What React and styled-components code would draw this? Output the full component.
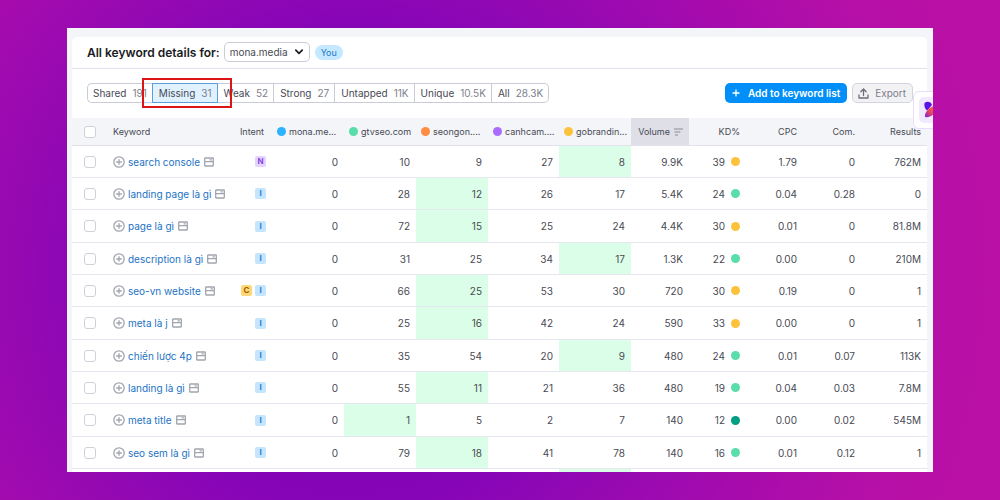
import React, { useState } from "react";
import styled, { createGlobalStyle } from "styled-components";

const SITES = [
  { name: "mona.me...", color: "#2bb3ff", width: 72 },
  { name: "gtvseo.com", color: "#59ddaa", width: 72 },
  { name: "seongon....", color: "#ff8c43", width: 72 },
  { name: "canhcam....", color: "#ab6cfe", width: 71 },
  { name: "gobrandin...", color: "#fdc23c", width: 72 },
];

const TABS = [
  { label: "Shared", count: "191" },
  { label: "Missing", count: "31" },
  { label: "Weak", count: "52" },
  { label: "Strong", count: "27" },
  { label: "Untapped", count: "11K" },
  { label: "Unique", count: "10.5K" },
  { label: "All", count: "28.3K" },
];

const KD_COLORS = {
  medium: "#fdc23c",
  easy: "#59ddaa",
  veryEasy: "#009f81",
};

// best: index of the site with the highest position
const KEYWORDS = [
  { word: "search console", intents: ["N"], ranks: [0, 10, 9, 27, 8], best: 4, volume: "9.9K", kd: 39, level: "medium", cpc: "1.79", com: "0", results: "762M" },
  { word: "landing page là gì", intents: ["I"], ranks: [0, 28, 12, 26, 17], best: 2, volume: "5.4K", kd: 24, level: "easy", cpc: "0.04", com: "0.28", results: "0" },
  { word: "page là gì", intents: ["I"], ranks: [0, 72, 15, 25, 24], best: 2, volume: "4.4K", kd: 30, level: "medium", cpc: "0.01", com: "0", results: "81.8M" },
  { word: "description là gì", intents: ["I"], ranks: [0, 31, 25, 34, 17], best: 4, volume: "1.3K", kd: 22, level: "easy", cpc: "0.00", com: "0", results: "210M" },
  { word: "seo-vn website", intents: ["C", "I"], ranks: [0, 66, 25, 53, 30], best: 2, volume: "720", kd: 30, level: "medium", cpc: "0.19", com: "0", results: "1" },
  { word: "meta là j", intents: ["I"], ranks: [0, 25, 16, 42, 24], best: 2, volume: "590", kd: 33, level: "medium", cpc: "0.00", com: "0", results: "1" },
  { word: "chiến lược 4p", intents: ["I"], ranks: [0, 35, 54, 20, 9], best: 4, volume: "480", kd: 24, level: "easy", cpc: "0.01", com: "0.07", results: "113K" },
  { word: "landing là gì", intents: ["I"], ranks: [0, 55, 11, 21, 36], best: 2, volume: "480", kd: 19, level: "easy", cpc: "0.04", com: "0.03", results: "7.8M" },
  { word: "meta title", intents: ["I"], ranks: [0, 1, 5, 2, 7], best: 1, volume: "140", kd: 12, level: "veryEasy", cpc: "0.00", com: "0.02", results: "545M" },
  { word: "seo sem là gì", intents: ["I"], ranks: [0, 79, 18, 41, 78], best: 2, volume: "140", kd: 16, level: "easy", cpc: "0.01", com: "0.12", results: "1" },
];

const PlusCircleIcon = () => (
  <svg width="12" height="12" viewBox="0 0 12 12" fill="none" stroke="#a2a5b0" strokeWidth="1.3">
    <circle cx="6" cy="6" r="5.2" />
    <path d="M6 3.2v5.6M3.2 6h5.6" />
  </svg>
);

const SerpIcon = () => (
  <svg width="10" height="10" viewBox="0 0 10 10" fill="none" stroke="#a2a5b0" strokeWidth="1.3">
    <rect x="0.7" y="1" width="8.6" height="8" rx="0.4" />
    <path d="M0.7 4.6h8.6M5.6 2.8h2.2" />
  </svg>
);

const ChevronIcon = () => (
  <svg width="8" height="6" viewBox="0 0 8 6" fill="none" stroke="#191b23" strokeWidth="1.7">
    <path d="M0.8 1.2L4 4.4l3.2-3.2" strokeLinecap="round" strokeLinejoin="round" />
  </svg>
);

const AddIcon = () => (
  <svg width="8" height="8" viewBox="0 0 8 8" stroke="#fff" strokeWidth="1.3">
    <path d="M4 0.5v7M0.5 4h7" />
  </svg>
);

const ExportIcon = () => (
  <svg width="11" height="11" viewBox="0 0 11 11" fill="none" stroke="#6c6e79" strokeWidth="1.3">
    <path d="M1 7V10h9V7M5.5 7.5V1.2M2.8 3.7l2.7-2.7 2.7 2.7" strokeLinecap="round" strokeLinejoin="round" />
  </svg>
);

const SortIcon = () => (
  <svg width="9" height="8" viewBox="0 0 9 8" stroke="#8a8e9b" strokeWidth="1.2">
    <path d="M0 1h9M0.5 4h6M1 7h3" />
  </svg>
);

const AssistantIcon = () => (
  <svg width="16" height="18" viewBox="0 0 16 18">
    <defs>
      <linearGradient id="blade" x1="0" y1="1" x2="1" y2="0">
        <stop offset="0" stopColor="#7a1ee0" />
        <stop offset="0.4" stopColor="#e8485c" />
        <stop offset="1" stopColor="#ff7a4a" />
      </linearGradient>
    </defs>
    <path d="M0.5 2C3 0 7 0.5 8 4L3.2 9.6C0.8 8 0 5 0.5 2Z" fill="#5a12e6" />
    <path d="M1.2 16C0 12 4.5 5.5 14.5 3.5C15 10 7 17.5 1.2 16Z" fill="url(#blade)" />
  </svg>
);

const App = () => {
  const [activeTab, setActiveTab] = useState("Missing");

  return (
    <>
      <GlobalStyle />
      <Page>
        <Frame>
          <Card>
            <CardHeader>
              <Title id="domain-label">All keyword details for:</Title>
              <SelectBox>
                <DomainSelect aria-labelledby="domain-label">
                  <option>mona.media</option>
                </DomainSelect>
                <SelectArrow>
                  <ChevronIcon />
                </SelectArrow>
              </SelectBox>
              <YouBadge>You</YouBadge>
            </CardHeader>

            <Toolbar>
              <Tabs>
                {TABS.map((tab) => (
                  <Tab
                    key={tab.label}
                    type="button"
                    $active={tab.label === activeTab}
                    onClick={() => setActiveTab(tab.label)}
                  >
                    {tab.label}
                    <TabCount>{tab.count}</TabCount>
                    {tab.label === "Missing" && <Highlight />}
                  </Tab>
                ))}
              </Tabs>
              <Actions>
                <AddButton type="button">
                  <AddIcon />
                  Add to keyword list
                </AddButton>
                <ExportButton type="button">
                  <ExportIcon />
                  Export
                </ExportButton>
              </Actions>
            </Toolbar>

            <Table>
              <colgroup>
                <Col $width={34} />
                <Col />
                <Col $width={44} />
                {SITES.map((site) => (
                  <Col key={site.name} $width={site.width} />
                ))}
                <Col $width={58} />
                <Col $width={57} />
                <Col $width={57} />
                <Col $width={58} />
                <Col $width={66} />
              </colgroup>
              <thead>
                <tr>
                  <HeadCell>
                    <Checkbox aria-label="Select all keywords" />
                  </HeadCell>
                  <HeadCell $align="left">Keyword</HeadCell>
                  <HeadCell $wide>Intent</HeadCell>
                  {SITES.map((site) => (
                    <HeadCell key={site.name}>
                      <SiteLabel>
                        <Dot $color={site.color} />
                        {site.name}
                      </SiteLabel>
                    </HeadCell>
                  ))}
                  <HeadCell $sorted>
                    <SortLabel>
                      Volume
                      <SortIcon />
                    </SortLabel>
                  </HeadCell>
                  <HeadCell>KD%</HeadCell>
                  <HeadCell>CPC</HeadCell>
                  <HeadCell>Com.</HeadCell>
                  <HeadCell>Results</HeadCell>
                </tr>
              </thead>
              <tbody>
                {KEYWORDS.map((item) => (
                  <Row key={item.word}>
                    <Cell>
                      <Checkbox aria-label={`Select ${item.word}`} />
                    </Cell>
                    <Cell $align="left">
                      <Keyword>
                        <IconButton type="button" aria-label={`Add ${item.word}`}>
                          <PlusCircleIcon />
                        </IconButton>
                        <KeywordLink href="#">{item.word}</KeywordLink>
                        <IconButton type="button" aria-label={`SERP of ${item.word}`}>
                          <SerpIcon />
                        </IconButton>
                      </Keyword>
                    </Cell>
                    <Cell>
                      <Intents>
                        {item.intents.map((intent) => (
                          <Intent key={intent} $type={intent}>
                            {intent}
                          </Intent>
                        ))}
                      </Intents>
                    </Cell>
                    {item.ranks.map((rank, i) => (
                      <Cell key={SITES[i].name} $best={i === item.best}>
                        {rank}
                      </Cell>
                    ))}
                    <Cell>{item.volume}</Cell>
                    <Cell>
                      <Difficulty>
                        {item.kd}
                        <Dot $color={KD_COLORS[item.level]} />
                      </Difficulty>
                    </Cell>
                    <Cell>{item.cpc}</Cell>
                    <Cell>{item.com}</Cell>
                    <Cell>{item.results}</Cell>
                  </Row>
                ))}
                <Row>
                  <Cell colSpan={7} />
                  <Cell $best />
                  <Cell colSpan={5} />
                </Row>
              </tbody>
            </Table>
          </Card>
          <Assistant type="button" aria-label="Open assistant">
            <AssistantTile>
              <AssistantIcon />
            </AssistantTile>
          </Assistant>
        </Frame>
      </Page>
    </>
  );
};

export default App;

const GlobalStyle = createGlobalStyle`
  * {
    box-sizing: border-box;
  }

  body {
    margin: 0;
    font-family: Inter, "Liberation Sans", sans-serif;
    font-size: 10px;
    color: #484a54;
  }

  button,
  select {
    font: inherit;
    color: inherit;
  }
`;

const Page = styled.main`
  display: flex;
  height: 100vh;
  padding: 28px 67px;
  background: radial-gradient(
    circle at 35% 54%,
    #7a00b9 0,
    #8605b7 240px,
    #980ab1 350px,
    #a60bad 440px,
    #b30fa8 540px,
    #ba10a6 650px
  );
`;

const Frame = styled.div`
  position: relative;
  flex: 1;
  min-width: 0;
  padding: 9px 6px 0 5px;
  background: #f4f5f9;
  overflow: hidden;
`;

const Card = styled.section`
  background: #fff;
  border-radius: 5px 5px 0 0;
`;

const CardHeader = styled.header`
  display: flex;
  align-items: center;
  height: 32px;
  padding: 0 15px 1px;
  border-bottom: 1px solid #e0e1e9;
`;

const Title = styled.h1`
  margin: 0 4px 0 0;
  font-size: 12px;
  font-weight: 600;
  color: #191b23;
`;

const SelectBox = styled.div`
  display: grid;
  align-items: center;
  width: 86px;
  margin-right: 5px;
`;

const DomainSelect = styled.select`
  grid-area: 1 / 1;
  appearance: none;
  height: 20px;
  padding: 0 5px;
  border: 1px solid #c9ccd6;
  border-radius: 5px;
  background: #fff;
`;

const SelectArrow = styled.span`
  grid-area: 1 / 1;
  justify-self: end;
  display: flex;
  margin-right: 7px;
  pointer-events: none;
`;

const YouBadge = styled.span`
  padding: 0 6px;
  border-radius: 8px;
  background: #c4e8ff;
  color: #1c78c8;
  font-size: 9px;
  line-height: 15px;
`;

const Toolbar = styled.div`
  display: flex;
  align-items: center;
  justify-content: space-between;
  height: 49px;
  padding: 0 14px 1px 15px;
`;

const Tabs = styled.div`
  display: flex;
`;

const Tab = styled.button`
  position: relative;
  display: flex;
  align-items: center;
  gap: 6px;
  height: 20px;
  padding: 0 5px 0 6px;
  border: 1px solid ${({ $active }) => ($active ? "#5c9fd8" : "#c9ccd6")};
  border-left-width: ${({ $active }) => ($active ? "1px" : "0")};
  background: ${({ $active }) => ($active ? "#e0f2ff" : "#fff")};
  white-space: nowrap;

  &:first-child {
    padding-left: 5px;
    border-left-width: 1px;
    border-right-width: 0;
    border-radius: 5px 0 0 5px;
  }

  &:last-child {
    border-radius: 0 5px 5px 0;
  }
`;

const TabCount = styled.span`
  color: #7d808c;
`;

const Highlight = styled.span`
  position: absolute;
  z-index: 1;
  inset: -6px -15px -6px -11px;
  border: 2px solid #dc1414;
  pointer-events: none;
`;

const Actions = styled.div`
  display: flex;
  gap: 5px;
`;

const ActionButton = styled.button`
  display: flex;
  align-items: center;
  height: 20px;
  border-radius: 5px;
  white-space: nowrap;
`;

const AddButton = styled(ActionButton)`
  gap: 8px;
  padding: 0 7px;
  border: 0;
  background: #008ff8;
  color: #fff;
  font-weight: 600;
`;

const ExportButton = styled(ActionButton)`
  gap: 6px;
  padding: 0 6px 0 5px;
  border: 1px solid #d3d5dd;
  background: #f2f2f5;
  color: #7d808c;
`;

const Table = styled.table`
  width: 100%;
  table-layout: fixed;
  border-spacing: 0;
`;

const Col = styled.col`
  width: ${({ $width }) => ($width ? `${$width}px` : "auto")};
`;

const HeadCell = styled.th`
  height: 28px;
  padding: 0 ${({ $wide }) => ($wide ? "8px" : "6px")} 0 0;
  border-bottom: 1px solid #e0e1e9;
  background: ${({ $sorted }) => ($sorted ? "#dfdfe8" : "#f4f5f9")};
  font-size: 9px;
  font-weight: 400;
  text-align: ${({ $align }) => $align || "right"};
  white-space: nowrap;

  &:first-child {
    padding-left: 12px;
    text-align: left;
  }

  &:nth-child(2) {
    padding-left: 7px;
  }
`;

const Row = styled.tr`
  height: 32px;

  &:nth-child(3n) {
    height: 33px;
  }
`;

const Cell = styled.td`
  padding: 0 6px 0 0;
  border-bottom: 1px solid #e6e7ee;
  background: ${({ $best }) => ($best ? "#dbfee8" : "transparent")};
  text-align: ${({ $align }) => $align || "right"};
  white-space: nowrap;

  &:first-child {
    padding-left: 12px;
    text-align: left;
  }

  &:nth-child(2) {
    padding-left: 7px;
  }
`;

const Checkbox = styled.input.attrs({ type: "checkbox" })`
  appearance: none;
  display: block;
  width: 12px;
  height: 12px;
  margin: 0;
  border: 1px solid #cfd1da;
  border-radius: 3px;
  background: #fff;

  &:checked {
    background: #008ff8;
  }
`;

const Keyword = styled.div`
  display: flex;
  align-items: center;
`;

const IconButton = styled.button`
  display: flex;
  padding: 0;
  border: 0;
  background: none;
  cursor: pointer;
`;

const KeywordLink = styled.a`
  margin: 0 4px 0 3px;
  color: #1c73c4;
  text-decoration: none;
`;

const Intents = styled.div`
  display: flex;
  justify-content: flex-end;
  gap: 3px;
`;

const INTENT_COLORS = {
  N: ["#e6d2ff", "#8649e1"],
  I: ["#c4e5fe", "#2a7fc9"],
  C: ["#fcd877", "#a75800"],
};

const Intent = styled.span`
  width: 11px;
  border-radius: 2px;
  background: ${({ $type }) => INTENT_COLORS[$type][0]};
  color: ${({ $type }) => INTENT_COLORS[$type][1]};
  font-size: 8px;
  font-weight: 700;
  line-height: 11px;
  text-align: center;
`;

const SiteLabel = styled.span`
  display: flex;
  align-items: center;
  gap: 3px;
  padding-left: 5px;
`;

const SortLabel = styled.span`
  display: flex;
  align-items: center;
  justify-content: flex-end;
  gap: 4px;
`;

const Difficulty = styled.span`
  display: flex;
  align-items: center;
  justify-content: flex-end;
  gap: 6px;
`;

const Dot = styled.span`
  flex: none;
  width: 9px;
  height: 9px;
  border-radius: 50%;
  background: ${({ $color }) => $color};
`;

const Assistant = styled.button`
  position: absolute;
  top: 63px;
  right: -20px;
  width: 40px;
  height: 38px;
  padding: 5px;
  border: 1px solid #eadcfb;
  border-radius: 6px;
  background: #fff;
`;

const AssistantTile = styled.span`
  display: flex;
  align-items: center;
  height: 26px;
  padding-left: 5px;
  border-radius: 5px;
  background: #f1e9fe;
`;
